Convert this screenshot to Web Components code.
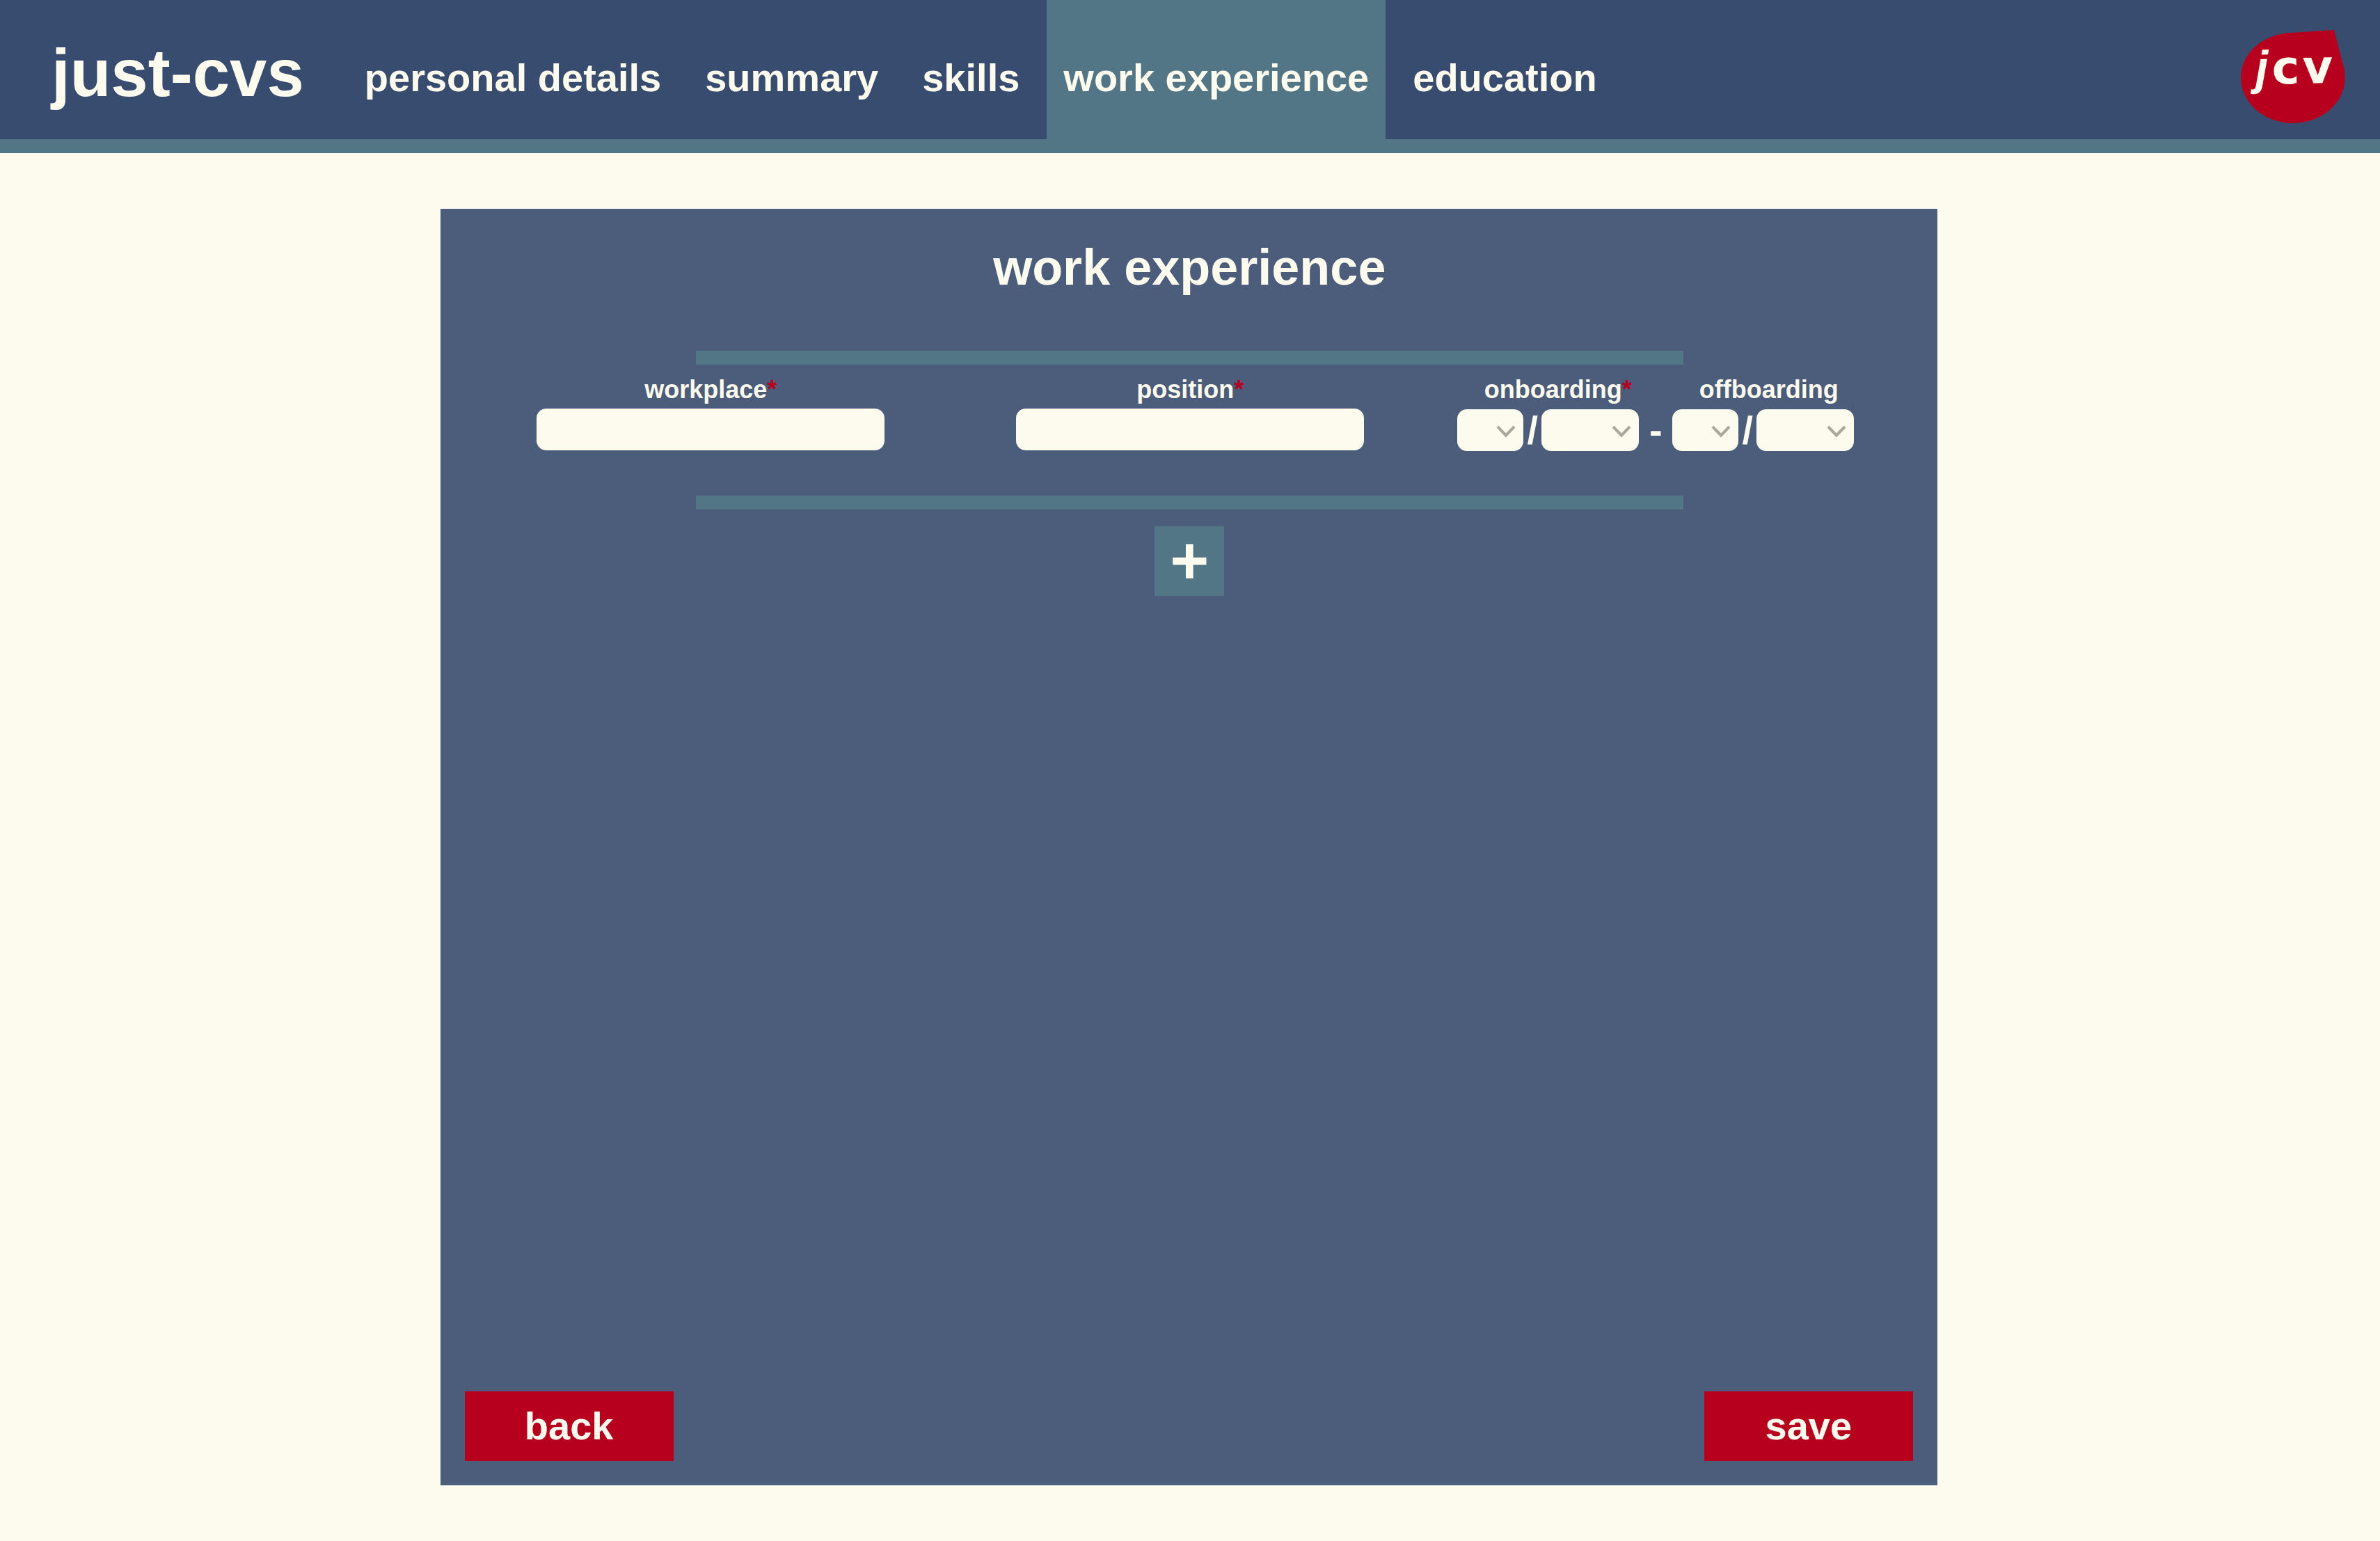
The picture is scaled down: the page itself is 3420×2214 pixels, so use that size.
<!DOCTYPE html>
<html lang="en">
<head>
<meta charset="utf-8">
<title>just-cvs</title>
<style>
  :root {
    --navy: #384c70;
    --panel: #4c5d7c;
    --teal: #527686;
    --cream: #fdfaee;
    --red: #b7001d;
  }
  body {
    margin: 0;
    background: var(--cream);
    color: var(--cream);
    font-family: "Liberation Sans", Arial, sans-serif;
    font-weight: bold;
  }
</style>
</head>
<body>
<cv-app></cv-app>
<script>
const define = (name, html, setup) => {
  const template = document.createElement('template');
  template.innerHTML = '<style>*{box-sizing:border-box}</style>' + html;
  customElements.define(name, class extends HTMLElement {
    constructor() {
      super();
      this.attachShadow({ mode: 'open' }).append(template.content.cloneNode(true));
    }
    connectedCallback() {
      if (setup) setup(this, this.shadowRoot);
    }
  });
};

/* Red drop badge at the end of the header */
define('cv-badge', `
  <style>
    :host { display: block; }
    svg { display: block; width: 150px; height: 134px; }
    text { font: bold 67px "DejaVu Sans", Verdana, sans-serif; fill: var(--cream); }
    .slant { font: italic bold 68px "Liberation Sans", Arial, sans-serif; }
  </style>
  <svg viewBox="0 0 150 134" role="img" aria-label="jcv">
    <path fill="var(--red)" d="M134 0 L148.500 56 Q149.700 62 149.700 69 A74.800 65 0 0 1 75 134 A75 65 0 0 1 0 69 C0 34 31 5 74 4 Z"/>
    <text transform="rotate(-1 75 77)" y="77"><tspan class="slant" x="21">j</tspan><tspan x="45 89">cv</tspan></text>
  </svg>
`);

/* One entry of the header navigation */
define('cv-tab', `
  <style>
    :host { display: flex; }
    a {
      display: flex; align-items: center;
      padding: 24px 24px 0;
      color: inherit; text-decoration: none;
      font-size: 56px; line-height: 64px; white-space: nowrap;
    }
    :host([active]) a { background: var(--teal); }
  </style>
  <a href="#"><slot></slot></a>
`);

define('cv-header', `
  <style>
    :host { display: block; }
    header {
      display: flex; align-items: stretch;
      min-height: 220px;
      padding: 0 50px 0 74px;
      background: var(--navy);
      border-bottom: 20px solid var(--teal);
    }
    .brand {
      display: flex; align-items: center;
      padding-top: 10px; margin-right: 63px;
      font-size: 96px; line-height: 110px; white-space: nowrap;
      color: inherit; text-decoration: none;
    }
    nav { display: flex; gap: 15px; flex: 1; }
    cv-badge { align-self: center; padding-top: 20px; }
  </style>
  <header>
    <a class="brand" href="#">just-cvs</a>
    <nav>
      <cv-tab>personal details</cv-tab>
      <cv-tab>summary</cv-tab>
      <cv-tab>skills</cv-tab>
      <cv-tab active>work experience</cv-tab>
      <cv-tab>education</cv-tab>
    </nav>
    <cv-badge></cv-badge>
  </header>
`);

define('cv-divider', `
  <style>
    :host { display: block; width: 66%; height: 20px; margin: 0 auto; background: var(--teal); }
  </style>
`);

define('cv-text-field', `
  <style>
    :host { display: flex; flex-direction: column; align-items: center; gap: 5px; }
    label { font-size: 36px; line-height: 44px; }
    label span { color: var(--red); }
    input {
      width: 500px; max-width: 100%; height: 60px;
      padding: 0 16px;
      border: 0; border-radius: 14px;
      background: var(--cream); color: var(--navy);
      font: inherit; font-size: 36px;
    }
  </style>
  <label for="field"><slot></slot><span>*</span></label>
  <input id="field" type="text" required>
`);

/* Start and end dates, each a month and a year drop-down */
define('cv-date-range', `
  <style>
    :host { display: block; width: 606px; }
    .labels { display: flex; justify-content: space-around; margin-bottom: 5px; }
    label { font-size: 36px; line-height: 44px; white-space: nowrap; }
    label span { color: var(--red); }
    .dates { display: flex; align-items: center; padding-left: 10px; }
    .date { display: flex; align-items: center; }
    .mark { font-size: 56px; line-height: 62px; text-align: center; }
    .slash { width: 26px; }
    .dash { width: 48px; }
    .pick { display: grid; align-items: center; }
    .pick > * { grid-area: 1 / 1; }
    select {
      appearance: none;
      width: 95px; height: 60px; padding: 0 12px;
      border: 0; border-radius: 14px;
      background: var(--cream); color: var(--navy);
      font: inherit; font-size: 36px;
    }
    .year select { width: 140px; }
    svg {
      justify-self: end; width: 28px; height: 20px; margin: 4px 11px 0 0;
      fill: none; stroke: #a9a89e; stroke-width: 4; pointer-events: none;
    }
  </style>
  <div class="labels">
    <label for="on-month">onboarding<span>*</span></label>
    <label for="off-month">offboarding</label>
  </div>
  <div class="dates">
    <div class="date">
      <div class="pick"><select id="on-month" required><option></option></select><svg viewBox="0 0 28 20"><path d="M2 3 L14 15.500 L26 3"/></svg></div>
      <span class="mark slash">/</span>
      <div class="pick year"><select aria-label="onboarding year" required><option></option></select><svg viewBox="0 0 28 20"><path d="M2 3 L14 15.500 L26 3"/></svg></div>
    </div>
    <span class="mark dash">-</span>
    <div class="date">
      <div class="pick"><select id="off-month"><option></option></select><svg viewBox="0 0 28 20"><path d="M2 3 L14 15.500 L26 3"/></svg></div>
      <span class="mark slash">/</span>
      <div class="pick year"><select aria-label="offboarding year"><option></option></select><svg viewBox="0 0 28 20"><path d="M2 3 L14 15.500 L26 3"/></svg></div>
    </div>
  </div>
`);

define('cv-button', `
  <style>
    :host { display: block; }
    button {
      display: block; width: 300px; height: 100px; padding: 0; border: 0;
      background: var(--red); color: var(--cream);
      font: inherit; font-size: 56px; line-height: 64px;
    }
    :host([add]) button { width: 100px; background: var(--teal); font-size: 96px; line-height: 96px; }
  </style>
  <button type="button"><slot></slot></button>
`);

define('cv-work-form', `
  <style>
    :host { display: flex; width: 62.9%; margin-left: 18.5%; }
    form {
      flex: 1; display: flex; flex-direction: column;
      background: var(--panel);
      padding: 42px 0 35px 2px;
    }
    h1 { margin: 0 0 78px; font-size: 72px; line-height: 84px; text-align: center; }
    .entry {
      display: grid; grid-template-columns: repeat(3, minmax(0, 1fr));
      padding: 14px 40px 63px 42px;
    }
    .range { display: flex; justify-content: center; padding-right: 24px; }
    .add { display: flex; justify-content: center; padding-top: 24px; }
    .actions { display: flex; justify-content: space-between; margin-top: auto; padding: 0 35px 0 33px; }
  </style>
  <form>
    <h1>work experience</h1>
    <cv-divider></cv-divider>
    <div class="entry">
      <cv-text-field>workplace</cv-text-field>
      <cv-text-field>position</cv-text-field>
      <div class="range"><cv-date-range></cv-date-range></div>
    </div>
    <cv-divider></cv-divider>
    <div class="add"><cv-button add>+</cv-button></div>
    <div class="actions">
      <cv-button>back</cv-button>
      <cv-button>save</cv-button>
    </div>
  </form>
`);

define('cv-app', `
  <style>
    :host { display: flex; flex-direction: column; min-height: 100vh; }
    main { flex: 1; display: flex; padding: 80px 0; }
  </style>
  <cv-header></cv-header>
  <main><cv-work-form></cv-work-form></main>
`);
</script>
</body>
</html>
